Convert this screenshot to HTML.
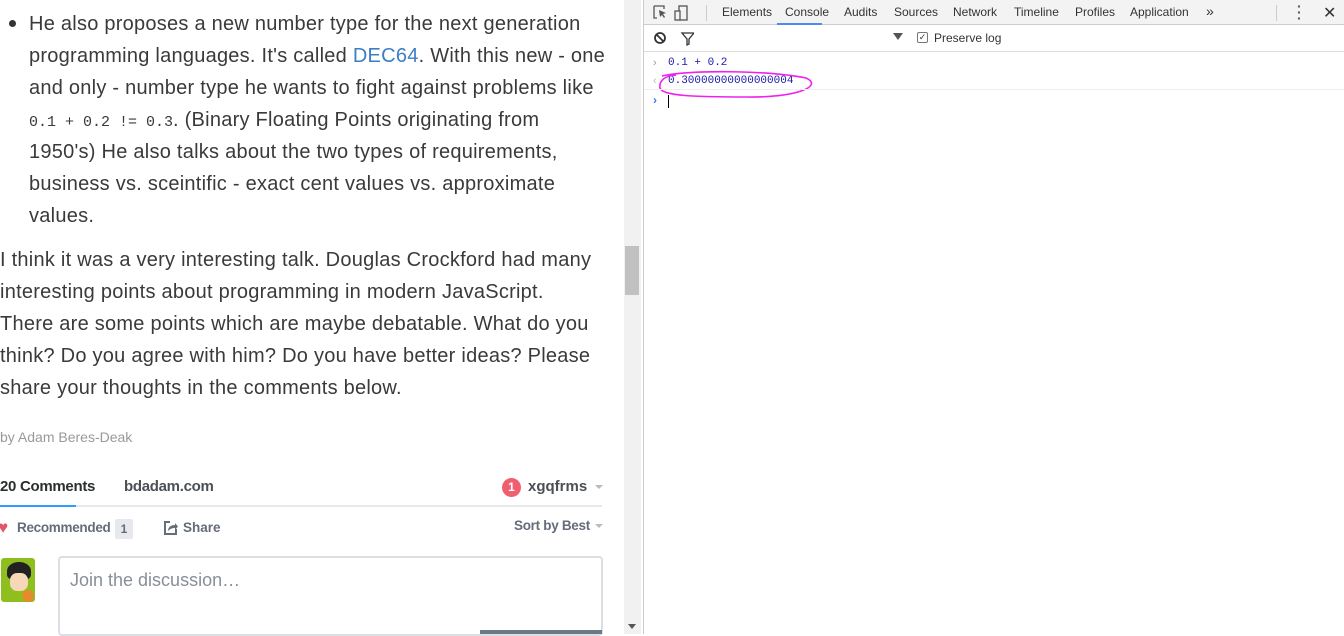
<!DOCTYPE html>
<html><head><meta charset="utf-8"><style>
*{margin:0;padding:0;box-sizing:border-box}
body{width:1344px;height:634px;overflow:hidden;background:#fff;font-family:"Liberation Sans",sans-serif;position:relative}
.l{position:absolute;left:0;top:0;width:624px;height:634px;color:#333}
.t{position:absolute;white-space:nowrap;font-size:20px;letter-spacing:0.25px;line-height:32px;color:#3a3a3a}
.code{font-family:"Liberation Mono",monospace;font-size:15px;letter-spacing:0;line-height:0}
.sb{position:absolute;left:624px;top:0;width:17px;height:634px;background:#f1f1f1}
.dt{position:absolute;left:643px;top:0;width:701px;height:634px;border-left:1px solid #ccc;background:#fff;font-size:12px;color:#333}
</style></head><body>
<div class="l">
<div style="position:absolute;left:9px;top:20px;width:7px;height:7px;border-radius:50%;background:#333"></div>
<div class="t" style="left:29px;top:8px">He also proposes a new number type for the next generation<br>programming languages. It's called <span style="color:#3b7fc4">DEC64</span>. With this new - one<br>and only - number type he wants to fight against problems like<br><span class="code">0.1 + 0.2 != 0.3</span>. (Binary Floating Points originating from<br>1950's) He also talks about the two types of requirements,<br>business vs. sceintific - exact cent values vs. approximate<br>values.</div>
<div class="t" style="left:0;top:244px">I think it was a very interesting talk. Douglas Crockford had many<br>interesting points about programming in modern JavaScript.<br>There are some points which are maybe debatable. What do you<br>think? Do you agree with him? Do you have better ideas? Please<br>share your thoughts in the comments below.</div>
<div style="position:absolute;left:0;top:429px;font-size:14px;color:#999">by Adam Beres-Deak</div>
<div style="position:absolute;left:0;top:478px;font-size:15px;font-weight:bold;color:#2a2e2e;letter-spacing:-0.3px">20 Comments</div>
<div style="position:absolute;left:124px;top:478px;font-size:15px;font-weight:bold;color:#4a5055;letter-spacing:-0.3px">bdadam.com</div>
<div style="position:absolute;left:502px;top:478px;width:19px;height:19px;border-radius:50%;background:#f05f70;color:#fff;font-size:12px;font-weight:bold;text-align:center;line-height:19px">1</div>
<div style="position:absolute;left:528px;top:478px;font-size:15px;font-weight:bold;color:#4a5055">xgqfrms</div>
<div style="position:absolute;left:595px;top:485px;border:4px solid transparent;border-top:4px solid #bbb"></div>
<div style="position:absolute;left:0;top:505px;width:602px;height:2px;background:#e7e9ee"></div>
<div style="position:absolute;left:0;top:505px;width:76px;height:2px;background:#2e9fff"></div>
<div style="position:absolute;left:-2px;top:518px;font-size:17px;color:#e0556a">&#9829;</div>
<div style="position:absolute;left:17px;top:520px;font-size:13.5px;font-weight:bold;color:#656c7a;letter-spacing:-0.3px">Recommended</div>
<div style="position:absolute;left:115px;top:519px;width:18px;height:20px;background:#e7e9ee;font-size:12px;font-weight:bold;color:#656c7a;text-align:center;line-height:20px;border-radius:2px">1</div>
<svg style="position:absolute;left:163px;top:520px" width="16" height="16"><path d="M7 2H2v12h11V9" stroke="#656c7a" stroke-width="2" fill="none"/><path d="M5 11c0-4 3-6 7-6V3l3 3.5-3 3.5V8c-3 0-5 1-7 3z" fill="#656c7a"/></svg>
<div style="position:absolute;left:183px;top:520px;font-size:13.5px;font-weight:bold;color:#656c7a">Share</div>
<div style="position:absolute;left:514px;top:518px;font-size:13.5px;font-weight:bold;color:#656c7a;letter-spacing:-0.3px">Sort by Best</div>
<div style="position:absolute;left:595px;top:524px;border:4px solid transparent;border-top:4px solid #bbb"></div>
<div style="position:absolute;left:1px;top:558px;width:34px;height:44px;background:#8fbf1f;border-radius:3px"></div>
<div style="position:absolute;left:7px;top:562px;width:24px;height:18px;background:#222;border-radius:50% 50% 30% 30%"></div>
<div style="position:absolute;left:10px;top:573px;width:18px;height:18px;background:#f6d7b8;border-radius:40%"></div>
<div style="position:absolute;left:22px;top:590px;width:12px;height:12px;background:#e58b2d;border-radius:50%"></div>
<div style="position:absolute;left:58px;top:556px;width:545px;height:80px;border:2px solid #dbdfe4;border-radius:4px"></div>
<div style="position:absolute;left:70px;top:570px;font-size:18px;color:#888f99">Join the discussion…</div>
<div style="position:absolute;left:480px;top:630px;width:122px;height:4px;background:#687a86"></div>
</div>
<div class="sb"><div style="position:absolute;left:1px;top:246px;width:14px;height:49px;background:#c1c1c1"></div>
<div style="position:absolute;left:4px;top:624px;border:4px solid transparent;border-top:5px solid #555"></div></div>
<div class="dt">
<div style="position:absolute;left:0;top:0;width:700px;height:25px;background:#f3f3f3;border-bottom:1px solid #ccc"></div>
<svg style="position:absolute;left:8px;top:4px" width="40" height="18"><path d="M2 2h10v3M2 2v12h3" stroke="#555" fill="none" stroke-width="1.3"/><path d="M7 6l7 3-3 1 2 3-1 1-2-3-2 2z" fill="#555"/><rect x="27" y="2" width="8" height="14" stroke="#555" fill="none" stroke-width="1.3"/><rect x="23" y="7" width="5" height="9" stroke="#555" fill="#f3f3f3" stroke-width="1.3"/></svg>
<div style="position:absolute;left:62px;top:5px;width:1px;height:16px;background:#ccc"></div>
<div style="position:absolute;left:78px;top:5px;color:#333">Elements</div>
<div style="position:absolute;left:141px;top:5px">Console</div>
<div style="position:absolute;left:133px;top:23px;width:45px;height:2px;background:#4a8af4"></div>
<div style="position:absolute;left:200px;top:5px">Audits</div>
<div style="position:absolute;left:250px;top:5px">Sources</div>
<div style="position:absolute;left:309px;top:5px">Network</div>
<div style="position:absolute;left:370px;top:5px">Timeline</div>
<div style="position:absolute;left:431px;top:5px">Profiles</div>
<div style="position:absolute;left:486px;top:5px">Application</div>
<div style="position:absolute;left:562px;top:3px;font-size:14px">»</div>
<div style="position:absolute;left:632px;top:5px;width:1px;height:16px;background:#ccc"></div>
<div style="position:absolute;left:653px;top:3px;font-size:14px;font-weight:bold;line-height:6px;color:#555">·<br>·<br>·</div>
<div style="position:absolute;left:679px;top:3px;font-size:16px;color:#333">✕</div>
<svg style="position:absolute;left:10px;top:31px" width="40" height="16"><circle cx="6" cy="7" r="5" stroke="#333" stroke-width="1.8" fill="none"/><path d="M3 4l6 6" stroke="#333" stroke-width="1.8"/><path d="M28 2h12l-5 6v5l-2 1v-6z" stroke="#333" stroke-width="1.3" fill="none"/></svg>
<div style="position:absolute;left:249px;top:33px;border:5px solid transparent;border-top:7px solid #555"></div>
<div style="position:absolute;left:273px;top:32px;width:11px;height:11px;border:1px solid #777;border-radius:2px;font-size:9px;line-height:9px;text-align:center">✓</div>
<div style="position:absolute;left:290px;top:31px">Preserve log</div>
<div style="position:absolute;left:0;top:51px;width:700px;height:1px;background:#ddd"></div>
<div style="position:absolute;left:9px;top:57px;color:#999;font-size:11px">›</div>
<div style="position:absolute;left:24px;top:57px;font-family:'Liberation Mono',monospace;font-size:11px;color:#1a1aa6">0.1 + 0.2</div>
<div style="position:absolute;left:9px;top:75px;color:#bbb;font-size:11px">‹</div>
<div style="position:absolute;left:24px;top:75px;font-family:'Liberation Mono',monospace;font-size:11px;color:#1a1aa6">0.30000000000000004</div>
<svg style="position:absolute;left:12px;top:68px" width="158" height="32"><path d="M6 8 C30 2,110 2,150 10 C168 18,140 30,90 29 C40 29,6 28,4 20 C3 13,8 8,20 7" stroke="#ee22ee" stroke-width="1.6" fill="none"/></svg>
<div style="position:absolute;left:0;top:89px;width:700px;height:1px;background:#eee"></div>
<div style="position:absolute;left:9px;top:93px;color:#367cf1;font-size:12px;font-weight:bold">›</div>
<div style="position:absolute;left:24px;top:95px;width:1px;height:13px;background:#000"></div>
</div>
</body></html>
